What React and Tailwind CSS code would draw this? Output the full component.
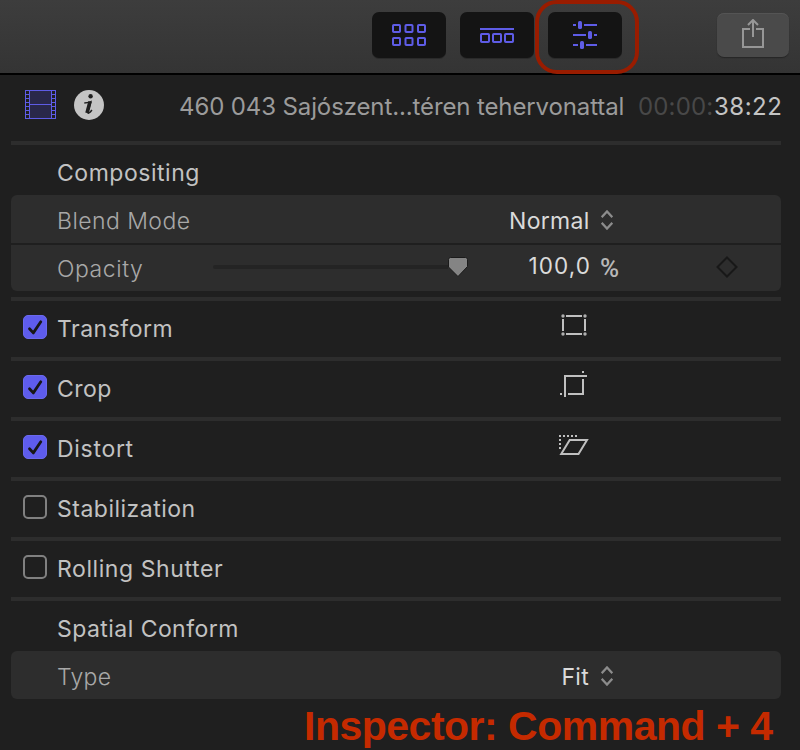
import React from "react";

const ACCENT = "#5e5ce6";

function ToolButton({ children, className = "" }) {
  return (
    <div className={`flex h-[46px] w-[74px] items-center justify-center rounded-[7px] bg-[#141414] shadow-[0_1px_0_#2a2a2a] ${className}`}>
      {children}
    </div>
  );
}

function BrowserIcon() {
  return (
    <svg width="34" height="22" viewBox="0 0 34 22" fill="none" stroke={ACCENT} strokeWidth="2">
      {[1, 13.5, 26].map((x) =>
        [1, 14].map((y) => <rect key={`${x}-${y}`} x={x} y={y} width="7" height="7" rx="0.8" />)
      )}
    </svg>
  );
}

function TimelineIcon() {
  return (
    <svg className="mt-px" width="34" height="15" viewBox="0 0 34 15" fill="none" stroke={ACCENT} strokeWidth="2">
      <path d="M0 1h34" />
      {[1, 13, 25].map((x) => (
        <rect key={x} x={x} y="6" width="8" height="8" rx="0.8" />
      ))}
    </svg>
  );
}

function InspectorIcon() {
  return (
    <svg width="24" height="28" viewBox="0 0 24 28" fill={ACCENT}>
      <path d="M0 3h3v2H0zM11 3h13v2H11zM0 13h13v2H0zM21 13h3v2h-3zM0 23h5v2H0zM13 23h11v2H13z" />
      <rect x="5" y="0" width="4" height="8" rx="1.6" />
      <rect x="15" y="10" width="4" height="8" rx="1.6" />
      <rect x="7" y="20" width="4" height="8" rx="1.6" />
    </svg>
  );
}

function ShareIcon() {
  return (
    <svg width="22" height="30" viewBox="0 0 22 30" fill="none" stroke="#979797" strokeWidth="2">
      <path d="M8 10H1v18h20V10h-7" />
      <path d="M11 18V1.5M6 6l5-5 5 5" />
    </svg>
  );
}

function FilmIcon() {
  return (
    <svg width="31" height="29" viewBox="0 0 31 29" fill="none" stroke={ACCENT} shapeRendering="crispEdges">
      <rect x="4.5" y="0.5" width="22" height="28" fill="#29284a" />
      <rect x="0.5" y="0.5" width="30" height="28" />
      <path d="M4.5 14.5h22" />
      <path d="M0 4.5h4M0 8.5h4M0 12.5h4M0 16.5h4M0 20.5h4M0 24.5h4M27 4.5h4M27 8.5h4M27 12.5h4M27 16.5h4M27 20.5h4M27 24.5h4" />
    </svg>
  );
}

function InfoIcon() {
  return (
    <svg width="30" height="30" viewBox="0 0 30 30">
      <circle cx="15" cy="15" r="15" fill="#c4c4c4" />
      <circle cx="16.6" cy="6.3" r="2.2" fill="#1f1f1f" />
      <path d="M10.300 13c2.200-.2 4.200-.7 6.600-1.400L14 21.800c-.3 1.300.2 1.600 1 1.100.9-.5 1.900-1.500 2.900-2.900" fill="none" stroke="#1f1f1f" strokeWidth="1.500" />
      <path d="M16 11.600 13 23" stroke="#1f1f1f" strokeWidth="3.600" fill="none" />
    </svg>
  );
}

function Chevrons({ className = "" }) {
  return (
    <svg className={`ml-3 ${className}`} width="12" height="20" viewBox="0 0 12 20" fill="none" stroke="#8c8c8c" strokeWidth="2.200">
      <path d="M.7 7.200 6 1.400l5.300 5.800M.7 12.800 6 18.600l5.300-5.800" />
    </svg>
  );
}

function Checkbox({ checked }) {
  return checked ? (
    <div className="size-6 rounded-[5px] border border-[#6a68ee] bg-[#5e5cec]">
      <svg width="22" height="22" viewBox="0 0 22 22" fill="none" stroke="#171717" strokeWidth="2.800" strokeLinecap="round" strokeLinejoin="round">
        <path d="M5.500 12.700 9.300 16.900 16.800 5.800" />
      </svg>
    </div>
  ) : (
    <div className="size-6 rounded-[5px] border-2 border-[#808080]" />
  );
}

function TransformIcon() {
  return (
    <svg className="mb-2" width="26" height="22" viewBox="0 0 26 22" fill="none" stroke="#c0c0c0" strokeWidth="2">
      <path d="M5 2h16M5 20h16M2 5v12M24 5v12" />
      <g fill="#b0b0b0" stroke="none">
        <circle cx="2" cy="2" r="1.700" />
        <circle cx="24" cy="2" r="1.700" />
        <circle cx="2" cy="20" r="1.700" />
        <circle cx="24" cy="20" r="1.700" />
      </g>
    </svg>
  );
}

function CropIcon() {
  return (
    <svg className="mb-[10px]" width="28" height="28" viewBox="0 0 28 28" fill="none" stroke="#c0c0c0" strokeWidth="2">
      <path d="M5 27V6h22M8 24h15V9" />
      <path d="M22 2h2M0 24h2" />
    </svg>
  );
}

function DistortIcon() {
  return (
    <svg className="mb-2" width="30" height="20" viewBox="0 0 30 20" fill="none" stroke="#c0c0c0" strokeWidth="2">
      <path d="M10.700 5H28L19.500 19H2.200z" />
      <path d="M0 1h18" strokeDasharray="2 2" />
      <path d="M1 4v10" strokeDasharray="2 2" />
    </svg>
  );
}

function Section({ title, checked, tracking, icon }) {
  return (
    <div className="flex h-[60px] border-t-4 border-[#2d2d2d]">
      <div className="flex w-[46px] items-start pt-[14px] pl-3">
        <Checkbox checked={checked} />
      </div>
      <div className={`w-[480px] leading-[56px] ${tracking}`}>{title}</div>
      <div className="flex w-[74px] items-center justify-center">{icon}</div>
    </div>
  );
}

export default function App() {
  return (
    <div className="h-[750px] w-[800px] overflow-hidden bg-[#1f1f1f] font-['Inter',sans-serif] text-[23px] whitespace-nowrap text-[#c2c2c2]">
      <div className="relative flex h-[75px] items-start border-b-2 border-black bg-linear-to-b from-[#3d3d3d] to-[#343434] pt-3 pl-[372px]">
        <ToolButton><BrowserIcon /></ToolButton>
        <ToolButton className="ml-[14px]"><TimelineIcon /></ToolButton>
        <ToolButton className="ml-[14px]"><InspectorIcon /></ToolButton>
        <div className="mt-px ml-[95px] flex h-11 w-18 items-center justify-center rounded-[7px] bg-[#4a4a4a] pb-0.5 shadow-[0_1px_1px_#262626,inset_0_1px_0_#545454]">
          <ShareIcon />
        </div>
        <div className="absolute top-0 left-[535px] h-[74px] w-[104px] rounded-[22px] border-4 border-[#991c00]" />
      </div>

      <div className="flex h-[66px] items-start pt-[15px] pl-[25px]">
        <FilmIcon />
        <div className="ml-[18px]"><InfoIcon /></div>
        <div className="ml-[75px] w-[459px] text-[24px] leading-[33px] tracking-[-0.120px] text-[#9b9b9b]">460 043 Sajószent...téren tehervonattal</div>
        <div className="flex text-[24px] leading-[33px]">
          <span className="w-[76px] tracking-[0.150px] text-[#484848]">00:00:</span>
          <span className="tracking-[0.500px] text-[#c4c4c4]">38:22</span>
        </div>
      </div>

      <div className="ml-[11px] w-[770px]">
        <div className="h-[54px] border-t-4 border-[#2d2d2d] pl-[46px] leading-[56px] tracking-[0.530px]">Compositing</div>
        <div className="overflow-hidden rounded-[6px] bg-[#2d2d2d] font-light">
          <div className="flex h-[50px] items-center border-b-2 border-[#1f1f1f] pt-1 pl-[46px]">
            <span className="w-[452px] tracking-[0.450px] text-[#a8a8a8]">Blend Mode</span>
            <span className="w-[80px] text-right font-normal tracking-[0.300px] text-[#dadada]">Normal</span>
            <Chevrons className="mb-0.5" />
          </div>
          <div className="flex h-[46px] items-start pl-[46px] leading-[46px]">
            <span className="w-[156px] pt-px tracking-[0.550px] text-[#a8a8a8]">Opacity</span>
            <div className="mt-3 flex h-5 w-[256px] items-center">
              <div className="h-1 w-[235px] rounded-l-full bg-[#242424]" />
              <svg width="20" height="20" viewBox="0 0 20 20" fill="#848484" stroke="#1b1b1b">
                <path d="M2.500.5h15a2 2 0 0 1 2 2v7L10 19.500.5 10V2.500a2 2 0 0 1 2-2z" />
              </svg>
            </div>
            <span className="-mt-[2px] w-[122px] text-right text-[22.500px] font-normal tracking-[1.100px] text-[#dadada]">100,0</span>
            <span className="ml-[9px] w-[116px] font-['Roboto',sans-serif] text-[26px] font-medium text-[#b8b8b8]">%</span>
            <svg className="mt-[11px]" width="22" height="22" viewBox="0 0 22 22" fill="none" stroke="#181818" strokeWidth="2">
              <path d="M11 1.500 20.500 11 11 20.500 1.500 11z" />
            </svg>
          </div>
        </div>
        <div className="h-1.5" />
        <Section title="Transform" checked tracking="tracking-[0.500px]" icon={<TransformIcon />} />
        <Section title="Crop" checked tracking="tracking-[0.450px]" icon={<CropIcon />} />
        <Section title="Distort" checked tracking="tracking-[0.700px]" icon={<DistortIcon />} />
        <Section title="Stabilization" tracking="tracking-[0.500px]" />
        <Section title="Rolling Shutter" tracking="tracking-[0.580px]" />
        <div className="h-[54px] border-t-4 border-[#2d2d2d] pl-[46px] leading-[56px] tracking-[0.450px]">Spatial Conform</div>
        <div className="flex h-12 items-center rounded-[6px] bg-[#2d2d2d] pt-1 pl-[46px]">
          <span className="w-[452px] font-light tracking-[0.300px] text-[#a8a8a8]">Type</span>
          <span className="w-[80px] text-right tracking-[0.300px] text-[#dadada]">Fit</span>
          <Chevrons className="mb-0.5" />
        </div>
      </div>

      <div className="pl-[304px] font-['Liberation_Sans',Arial,sans-serif] text-[41px] leading-[54px] font-bold tracking-[-0.500px] text-[#c52a00]">Inspector: Command + 4</div>
    </div>
  );
}
